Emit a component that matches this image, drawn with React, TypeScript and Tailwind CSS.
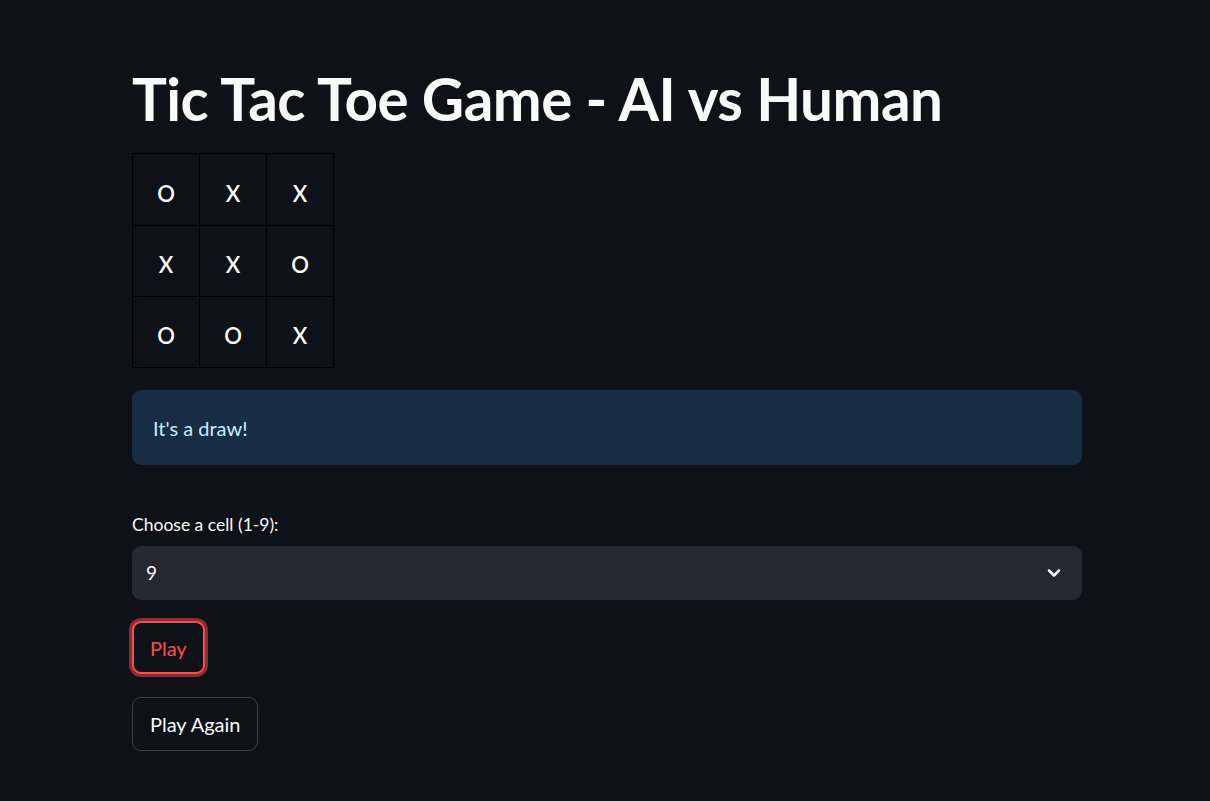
import { useState } from "react";

const board = ["O", "X", "X", "X", "X", "O", "O", "O", "X"];

function App() {
  const [cell, setCell] = useState("9");

  return (
    <div
      className="min-h-screen w-full bg-[#0e1117] text-[#fafafa]"
      style={{ fontFamily: '"Source Sans Pro", Lato, "Noto Sans", sans-serif' }}
    >
      <div className="w-[950px] ml-[132px] pt-[65px]">
        <h1 className="text-[58.4px] font-bold leading-[66px] tracking-[-0.5px]">
          Tic Tac Toe Game - AI vs Human
        </h1>

        <div className="mt-[22px] grid grid-cols-[67px_67px_67px] grid-rows-[72px_71px_71px] w-fit border-l border-t border-black">
          {board.map((v, i) => (
            <div
              key={i}
              className="flex items-center justify-center pt-[7px] text-[22px] font-semibold bg-[#0e1117] border-r border-b border-black"
            >
              {v}
            </div>
          ))}
        </div>

        <div className="mt-[22px] h-[75px] rounded-[9px] bg-[#172d43] px-[21px] flex items-center text-[20px] text-[#c7ebff]">
          It's a draw!
        </div>

        <label className="block mt-[49px] text-[17.5px] leading-[22px]">Choose a cell (1-9):</label>
        <div className="mt-[10px] h-[54px] rounded-[9px] bg-[#262730] flex items-center justify-between pl-[14px] pr-[18px] text-[19px]">
          <span>{cell}</span>
          <svg width="20" height="20" viewBox="0 0 24 24" fill="none" stroke="#fafafa" strokeWidth="3" strokeLinecap="round" strokeLinejoin="round" onClick={() => setCell(cell)}>
            <path d="M6 9l6 6 6-6" />
          </svg>
        </div>

        <div className="mt-[21px]">
          <button className="h-[53px] px-[16px] rounded-[9px] border-2 border-[#ff4b4b] bg-[#0e1117] text-[#ff4b4b] text-[20px] shadow-[0_0_0_3px_rgba(255,75,75,0.5)]">
            Play
          </button>
        </div>
        <div className="mt-[23px]">
          <button className="h-[54px] px-[17px] rounded-[9px] border border-[rgba(250,250,250,0.2)] bg-[#0e1117] text-[20px]">
            Play Again
          </button>
        </div>
      </div>
    </div>
  );
}

export default App;
